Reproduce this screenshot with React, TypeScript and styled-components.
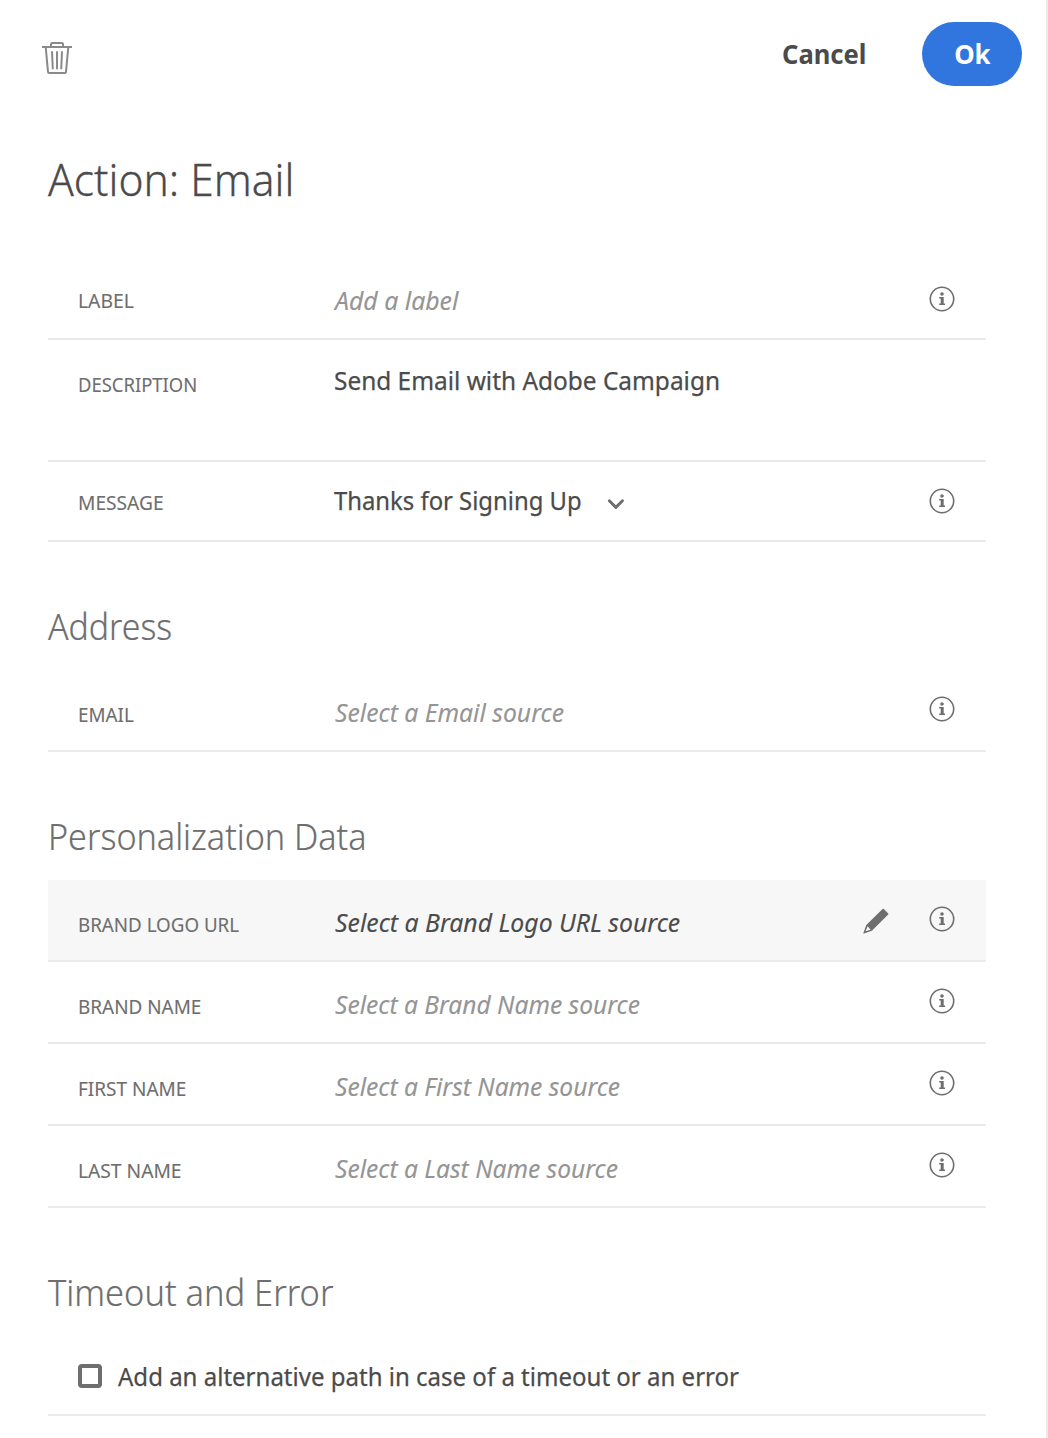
import React from "react";
import styled, { createGlobalStyle } from "styled-components";

const GlobalStyle = createGlobalStyle`
  * { box-sizing: border-box; }
  body {
    margin: 0;
    background: #fff;
    font-family: "Noto Sans", "Open Sans", sans-serif;
    color: #4b4b4b;
  }
`;

const Panel = styled.main`
  width: 1048px;
  height: 1438px;
  overflow: hidden;
  border-right: 2px solid #eaeaea;
  background: #fff;
`;

const Toolbar = styled.header`
  display: flex;
  align-items: center;
  height: 108px;
  padding: 0 24px 0 40px;
`;

const IconButton = styled.button`
  display: flex;
  padding: 0;
  border: 0;
  background: none;
  margin: 7px auto 0 0;
`;

const CancelButton = styled.button`
  width: 84px;
  height: 64px;
  margin-right: 56px;
  padding: 0 0 1px;
  border: 0;
  background: none;
  color: #4b4b4b;
  font: 700 27.5px/63px "Noto Sans", sans-serif;
  white-space: nowrap;
  text-align: left;
`;

const OkButton = styled.button`
  width: 100px;
  height: 64px;
  padding: 0 0 1px;
  border: 0;
  border-radius: 32px;
  background: #3076de;
  color: #fff;
  font: 700 27.5px/63px "Noto Sans", sans-serif;
`;

const Fit = styled.span<{ $x: number; $center?: boolean }>`
  display: inline-block;
  white-space: nowrap;
  transform: scaleX(${(p) => p.$x});
  transform-origin: ${(p) => (p.$center ? "50%" : "0")} 50%;
`;

const Content = styled.div`
  padding: 41px 60px 0 48px;
`;

const Title = styled.h1`
  height: 111px;
  margin: 0;
  font-size: 44px;
  font-weight: 300;
  line-height: 60px;
  -webkit-text-stroke: 0.3px currentColor;
`;

const SectionTitle = styled.h2`
  margin: 59px 0 19px;
  color: #6e6e6e;
  font-size: 37.5px;
  font-weight: 300;
  line-height: 50px;
  -webkit-text-stroke: 0.2px currentColor;
`;

const Field = styled.div<{ $height: number; $active?: boolean }>`
  display: flex;
  align-items: flex-start;
  height: ${(p) => p.$height}px;
  padding: 0 31px 0 30px;
  border-bottom: 2px solid #eaeaea;
  background: ${(p) => (p.$active ? "#f7f7f7" : "transparent")};
`;

const FieldLabel = styled.div<{ $top: number }>`
  width: 256px;
  flex: none;
  padding-top: ${(p) => p.$top}px;
  color: #6e6e6e;
  font-size: 19.6px;
  line-height: 32px;
  -webkit-text-stroke: 0.1px currentColor;
`;

const FieldValue = styled.div<{ $top: number; $left?: number; $tone: "set" | "empty" | "active" }>`
  flex: 1;
  padding-top: ${(p) => p.$top}px;
  padding-left: ${(p) => p.$left ?? 0}px;
  color: ${(p) => (p.$tone === "empty" ? "#959595" : "#4b4b4b")};
  font-size: 26px;
  font-style: ${(p) => (p.$tone === "set" ? "normal" : "italic")};
  line-height: 32px;
  -webkit-text-stroke: ${(p) => (p.$tone === "set" ? 0.25 : 0.12)}px currentColor;
`;

const Select = styled.div`
  display: flex;
  align-items: center;
  justify-content: space-between;
  width: 291px;
  height: 32px;

  svg { margin-top: 8px; }
`;

const SelectText = styled.span`
  width: 248px;
`;

const Actions = styled.div`
  display: flex;
  gap: 40px;
  padding-top: 26px;
`;

const CheckRow = styled.label`
  display: flex;
  align-items: center;
  gap: 16px;
  height: 80px;
  padding-left: 30px;
  border-bottom: 2px solid #eaeaea;
  font-size: 26px;
  line-height: 32px;
  -webkit-text-stroke: 0.25px currentColor;
`;

const CheckText = styled.span`
  padding-top: 1px;
`;

const CheckBox = styled.input`
  appearance: none;
  width: 24px;
  height: 24px;
  margin: 2px 0 0;
  border: 4px solid #6e6e6e;
  border-radius: 4px;
`;

const PencilSlot = styled.span`
  display: flex;
  padding-top: 2px;
`;

const TrashIcon = () => (
  <svg width="34" height="36" viewBox="0 0 34 36" fill="none" stroke="#8a8a8a" strokeWidth="2">
    <path d="M2 7h30" />
    <path d="M11 7V4.200Q11 3 12.200 3h9.600Q23 3 23 4.200V7" />
    <path d="M5.700 7l2.300 24.800q.1 1.200 1.300 1.200h15.400q1.200 0 1.300-1.200L28.300 7" />
    <path d="M12 11.300l.8 18M17 11.300v18M22 11.300l-.8 18" strokeWidth="2" />
  </svg>
);

const InfoIcon = () => (
  <svg width="26" height="26" viewBox="0 0 26 26" fill="#6e6e6e">
    <circle cx="13" cy="13" r="11.7" fill="none" stroke="#6e6e6e" strokeWidth="1.6" />
    <circle cx="13" cy="8" r="1.8" />
    <path d="M10.200 11.100h4.500v6.300h1.300v1.500h-5.800v-1.500h1.500v-4.800h-1.500z" />
  </svg>
);

const PencilIcon = () => (
  <svg width="26" height="26" viewBox="0 0 26 26" fill="#6e6e6e">
    <path
      fillRule="evenodd"
      d="M19.600 1q.6-.5 1.200 0l4.400 4.400q.5.600 0 1.200L8.900 22.700.9 25.500q-.7.200-.5-.5L3.300 16.900zM4.700 18.200L2.500 23.200l5.100-1.500z"
    />
  </svg>
);

const ChevronIcon = () => (
  <svg width="18" height="12" viewBox="0 0 18 12" fill="none" stroke="#6e6e6e" strokeWidth="2.900" strokeLinecap="round" strokeLinejoin="round">
    <path d="M2.300 2.800L8.900 9.400l6.600-6.600" />
  </svg>
);

type SourceProps = { label: string; labelFit: number; value: string; fit: number; active?: boolean };

const SourceField = ({ label, labelFit, value, fit, active }: SourceProps) => (
  <Field $height={82} $active={active}>
    <FieldLabel $top={29}><Fit $x={labelFit}>{label}</Fit></FieldLabel>
    <FieldValue $top={26} $left={1.4} $tone={active ? "active" : "empty"}><Fit $x={fit}>{value}</Fit></FieldValue>
    <Actions>
      {active && <PencilSlot><PencilIcon /></PencilSlot>}
      <InfoIcon />
    </Actions>
  </Field>
);

export default function App() {
  return (
    <>
      <GlobalStyle />
      <Panel>
        <Toolbar>
          <IconButton aria-label="Delete"><TrashIcon /></IconButton>
          <CancelButton><Fit $x={0.93}>Cancel</Fit></CancelButton>
          <OkButton><Fit $x={0.94} $center>Ok</Fit></OkButton>
        </Toolbar>
        <Content>
          <Title><Fit $x={0.966}>Action: Email</Fit></Title>
          <Field $height={80}>
            <FieldLabel $top={25}><Fit $x={0.985}>LABEL</Fit></FieldLabel>
            <FieldValue $top={24} $left={0.5} $tone="empty"><Fit $x={0.955}>Add a label</Fit></FieldValue>
            <Actions><InfoIcon /></Actions>
          </Field>
          <Field $height={122}>
            <FieldLabel $top={29}><Fit $x={0.94}>DESCRIPTION</Fit></FieldLabel>
            <FieldValue $top={24} $tone="set"><Fit $x={0.939}>Send Email with Adobe Campaign</Fit></FieldValue>
          </Field>
          <Field $height={80}>
            <FieldLabel $top={25}><Fit $x={0.978}>MESSAGE</Fit></FieldLabel>
            <FieldValue $top={22} $tone="set">
              <Select>
                <SelectText><Fit $x={0.917}>Thanks for Signing Up</Fit></SelectText>
                <ChevronIcon />
              </Select>
            </FieldValue>
            <Actions><InfoIcon /></Actions>
          </Field>

          <SectionTitle><Fit $x={0.902}>Address</Fit></SectionTitle>
          <SourceField label="EMAIL" labelFit={0.96} value="Select a Email source" fit={0.95} />

          <SectionTitle><Fit $x={0.91}>Personalization Data</Fit></SectionTitle>
          <SourceField label="BRAND LOGO URL" labelFit={0.957} value="Select a Brand Logo URL source" fit={0.953} active />
          <SourceField label="BRAND NAME" labelFit={0.965} value="Select a Brand Name source" fit={0.945} />
          <SourceField label="FIRST NAME" labelFit={0.968} value="Select a First Name source" fit={0.945} />
          <SourceField label="LAST NAME" labelFit={0.98} value="Select a Last Name source" fit={0.945} />

          <SectionTitle><Fit $x={0.918}>Timeout and Error</Fit></SectionTitle>
          <CheckRow>
            <CheckBox type="checkbox" />
            <CheckText><Fit $x={0.924}>Add an alternative path in case of a timeout or an error</Fit></CheckText>
          </CheckRow>
        </Content>
      </Panel>
    </>
  );
}
